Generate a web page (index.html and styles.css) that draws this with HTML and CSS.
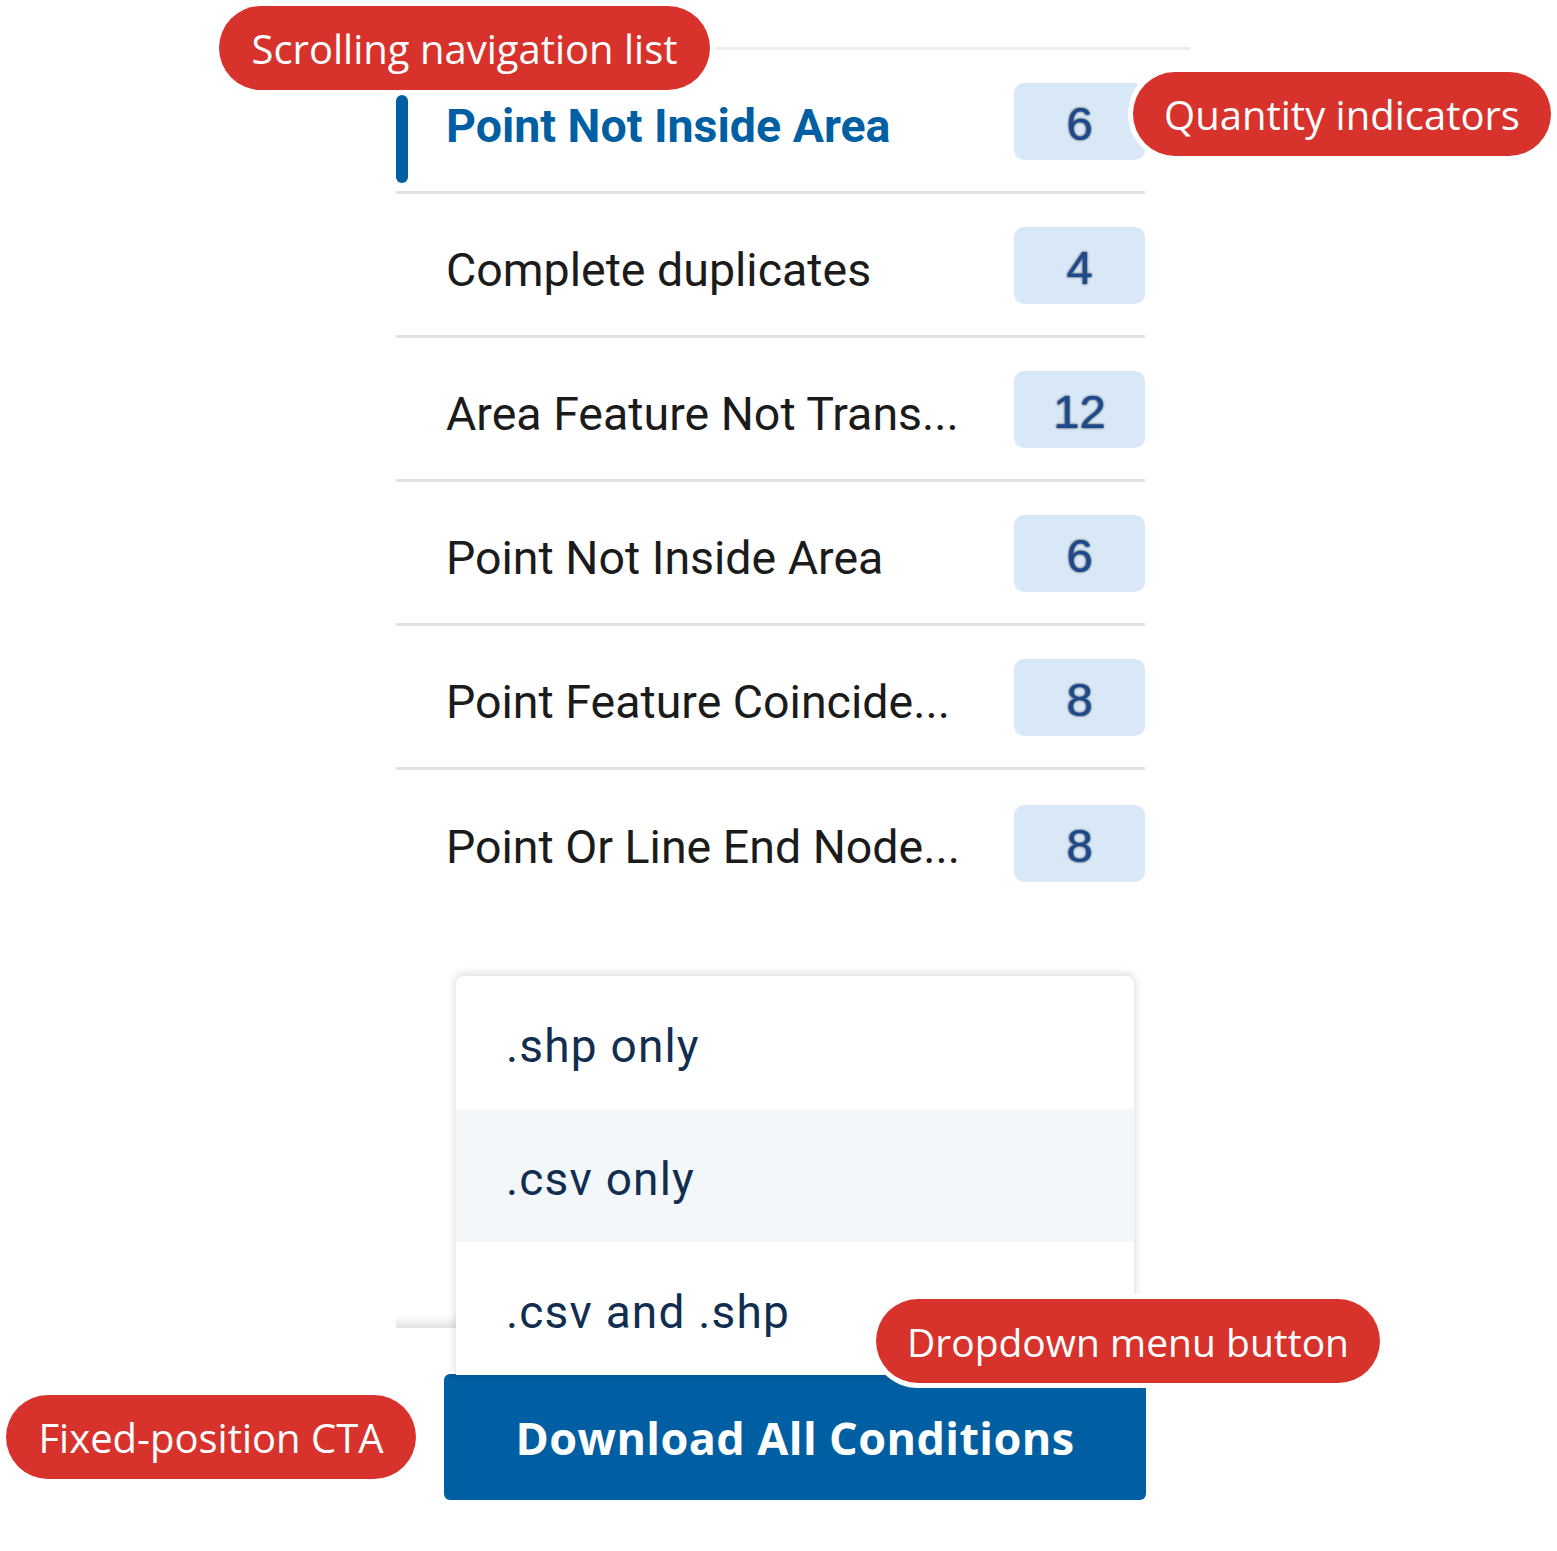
FILE: index.html
```html
<!DOCTYPE html>
<html>
<head>
<meta charset="utf-8">
<link rel="stylesheet" href="styles.css">
</head>
<body>
<div class="page">
  <div class="topline"></div>
  <ul class="list">
    <li class="row active"><span class="name">Point Not Inside Area</span><span class="badge">6</span></li>
    <li class="row"><span class="name">Complete duplicates</span><span class="badge">4</span></li>
    <li class="row"><span class="name">Area Feature Not Trans...</span><span class="badge">12</span></li>
    <li class="row"><span class="name">Point Not Inside Area</span><span class="badge">6</span></li>
    <li class="row"><span class="name">Point Feature Coincide...</span><span class="badge">8</span></li>
    <li class="row last"><span class="name">Point Or Line End Node...</span><span class="badge">8</span></li>
  </ul>
  <div class="footer">
    <div class="cta-wrap">
      <ul class="menu">
        <li class="menu-item">.shp only</li>
        <li class="menu-item hover">.csv only</li>
        <li class="menu-item">.csv and .shp</li>
      </ul>
      <button class="cta">Download All Conditions</button>
    </div>
  </div>

  <div class="label label-scroll">Scrolling navigation list</div>
  <div class="label label-qty">Quantity indicators</div>
  <div class="label label-dd">Dropdown menu button</div>
  <div class="label label-cta">Fixed-position CTA</div>
</div>
</body>
</html>
```
FILE: styles.css
```css
* { box-sizing: border-box; }
html, body { margin: 0; padding: 0; background: #fff; }
.page {
  position: relative;
  width: 1557px;
  height: 1551px;
  overflow: hidden;
  font-family: Roboto, "Liberation Sans", sans-serif;
  padding-top: 47px;
}
.topline {
  margin-left: 396px;
  width: 794px;
  height: 3px;
  background: #eceef0;
}
.list {
  list-style: none;
  margin: 0 0 0 396px;
  padding: 0;
  width: 749px;
}
.row {
  position: relative;
  display: flex;
  align-items: center;
  justify-content: space-between;
  height: 144px;
  padding-left: 50px;
  padding-top: 2px;
  border-bottom: 3px solid #dfe1e3;
}
.row.last { border-bottom: none; }
.name {
  font-size: 46.5px;
  color: #1b1b1b;
  padding-top: 8px;
}
.active .name {
  color: #005ea2;
  font-weight: 700;
}
.active::before {
  content: "";
  position: absolute;
  left: 0;
  top: 45px;
  width: 12px;
  height: 88px;
  border-radius: 6px;
  background: #005ea2;
}
.badge {
  width: 131px;
  height: 77px;
  border-radius: 10px;
  background: #d9e8f6;
  display: flex;
  align-items: center;
  justify-content: center;
  padding-top: 4px;
  font-family: "Liberation Sans", Arial, sans-serif;
  font-weight: 400;
  font-size: 47px;
  color: #1b4a8f;
  text-shadow: 0 0 1px #5d6268, 0 0 2px #6c7177, 0 0 3px rgba(0,0,0,0.4);
}
.footer {
  position: relative;
  margin-top: 414px;
  margin-left: 396px;
  width: 749px;
  height: 180px;
  background: #fff;
  padding-top: 46px;
  padding-left: 48px;
}
.footer::before {
  content: "";
  position: absolute;
  left: 0;
  right: 0;
  top: -13px;
  height: 13px;
  background: linear-gradient(to bottom, rgba(0,0,0,0), rgba(0,0,0,0.11));
}
.cta-wrap {
  position: relative;
  width: 702px;
}
.menu {
  position: absolute;
  left: 12px;
  right: 12px;
  bottom: 100%;
  margin: 0 0 -1px 0;
  padding: 0;
  list-style: none;
  background: #fff;
  border-radius: 8px 8px 0 0;
  box-shadow: 0 -1px 8px 1px rgba(0,0,0,0.15);
}
.menu-item {
  height: 133px;
  display: flex;
  align-items: center;
  padding-left: 50px;
  padding-top: 6px;
  font-size: 46px;
  letter-spacing: 1.2px;
  color: #112e51;
}
.menu-item.hover { background: #f4f7fa; }
.cta {
  display: block;
  width: 702px;
  height: 126px;
  border: none;
  border-radius: 6px;
  background: #005ea2;
  color: #fff;
  font-family: "Open Sans", Roboto, sans-serif;
  font-weight: 700;
  font-size: 45px;
  letter-spacing: 0.4px;
  padding: 0;
}
.label {
  position: absolute;
  height: 84px;
  border-radius: 42px;
  background: #d7332c;
  box-shadow: 0 0 0 5px #fff;
  color: #fff;
  font-family: "Open Sans", Lato, sans-serif;
  font-size: 40px;
  display: flex;
  align-items: center;
  justify-content: center;
  white-space: nowrap;
}
.label-scroll { left: 219px; top: 6px; width: 491px; }
.label-qty { left: 1133px; top: 72px; width: 418px; }
.label-dd { left: 876px; top: 1299px; width: 504px; font-size: 39px; }
.label-cta { left: 6px; top: 1395px; width: 410px; }
```
